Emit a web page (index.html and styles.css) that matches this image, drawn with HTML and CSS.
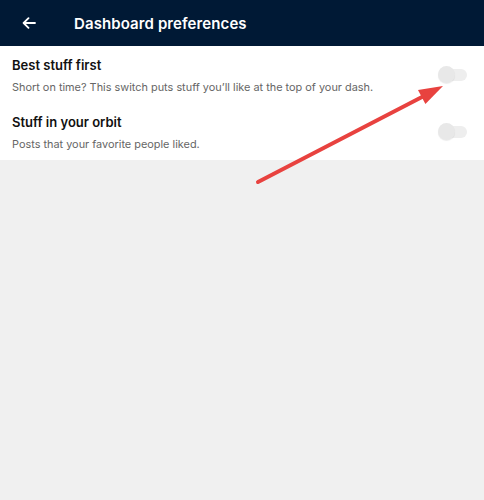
FILE: index.html
```html
<!DOCTYPE html>
<html lang="en">
<head>
    <meta charset="UTF-8">
    <meta name="viewport" content="width=device-width, initial-scale=1.0">
    <title>Dashboard preferences</title>
    <link rel="stylesheet" href="styles.css">
</head>
<body>
    <header class="topbar">
        <button class="back" aria-label="Back">
            <svg width="14" height="12" viewBox="0 0 14 12">
                <path d="M13 6H1.8M6.5 1.2L1.6 6l4.9 4.8" fill="none" stroke="#fff" stroke-width="1.8" stroke-linecap="round" stroke-linejoin="round"/>
            </svg>
        </button>
        <h1>Dashboard preferences</h1>
    </header>

    <section class="prefs">
        <div class="pref-row">
            <div class="pref-text">
                <h2>Best stuff first</h2>
                <p>Short on time? This switch puts stuff you’ll like at the top of your dash.</p>
            </div>
            <span class="switch"><span class="knob"></span></span>
        </div>
        <div class="pref-row">
            <div class="pref-text">
                <h2>Stuff in your orbit</h2>
                <p>Posts that your favorite people liked.</p>
            </div>
            <span class="switch"><span class="knob"></span></span>
        </div>
    </section>

    <!-- annotation arrow drawn over the page -->
    <svg class="annotation" width="484" height="500" viewBox="0 0 484 500">
        <line x1="258" y1="182" x2="422" y2="97" stroke="#e8423f" stroke-width="4" stroke-linecap="round"/>
        <polygon points="443,86 418,89.9 425.4,104.1" fill="#e8423f"/>
    </svg>
</body>
</html>
```

FILE: styles.css
```css
body {
    margin: 0;
    font-family: 'Inter', 'Liberation Sans', sans-serif;
    background-color: #f0f0f0;
    min-height: 500px;
    position: relative;
}
.topbar {
    height: 46px;
    background-color: #001935;
    display: flex;
    align-items: center;
    color: #fff;
}
.back {
    background: none;
    border: none;
    padding: 0;
    margin-left: 22px;
    width: 14px;
    height: 12px;
    display: flex;
}
.topbar h1 {
    margin: 0 0 0 38px;
    font-size: 15px;
    font-weight: 600;
    letter-spacing: 0.1px;
}
.prefs {
    background-color: #fff;
    padding: 11px 0 9px;
    display: flex;
    flex-direction: column;
    gap: 20px;
}
.pref-row {
    display: flex;
    align-items: flex-start;
    justify-content: space-between;
    padding: 0 17px 0 12px;
}
.pref-text h2 {
    margin: 0;
    font-size: 13px;
    font-weight: 600;
    color: #111;
    line-height: 16px;
}
.pref-text p {
    margin: 7px 0 0;
    font-size: 10.9px;
    color: #666;
    line-height: 14px;
}
.switch {
    position: relative;
    width: 26px;
    height: 12px;
    border-radius: 6px;
    background-color: #eeeeee;
    margin-top: 12px;
}
.knob {
    position: absolute;
    left: -3px;
    top: -3px;
    width: 17px;
    height: 17px;
    border-radius: 50%;
    background-color: #e8e8e8;
    box-shadow: 0 1px 1px rgba(0, 0, 0, 0.08);
}
.annotation {
    position: absolute;
    left: 0;
    top: 0;
    pointer-events: none;
}
```
